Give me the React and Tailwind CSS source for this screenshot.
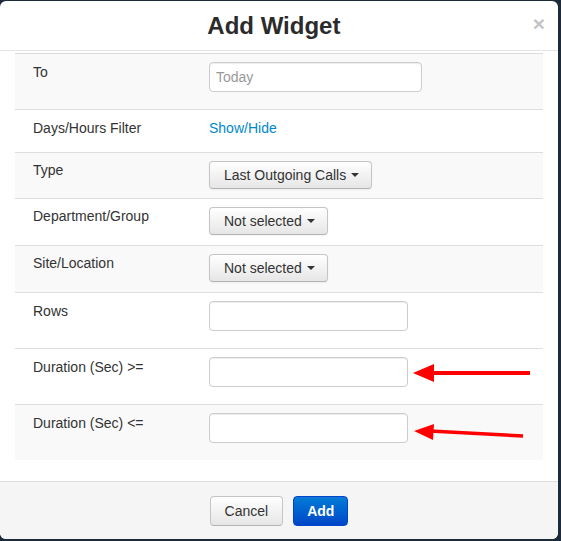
import React from "react";

const font = { fontFamily: '"Liberation Sans", Arial, sans-serif' };

function Caret() {
  return (
    <span className="ml-[5px] inline-block h-0 w-0 border-x-[4px] border-t-[4px] border-x-transparent border-t-[#333] align-middle" />
  );
}

function Dropdown({ label }) {
  return (
    <button
      type="button"
      className="mt-px flex h-[28px] items-center rounded-[4px] border border-[#c5c5c5] border-b-[#b3b3b3] bg-gradient-to-b from-white to-[#e6e6e6] pl-[14px] pr-[12px] text-[14px] text-[#333] shadow-[inset_0_1px_0_rgba(255,255,255,0.2),0_1px_2px_rgba(0,0,0,0.05)]"
    >
      {label}
      <Caret />
    </button>
  );
}

function TextInput({ width, placeholder }) {
  return (
    <input
      placeholder={placeholder}
      className={`h-[30px] ${width} rounded-[4px] border border-[#ccc] bg-white px-[6px] text-[14px] text-[#555] placeholder:text-[#999] shadow-[inset_0_1px_1px_rgba(0,0,0,0.075)] outline-none`}
    />
  );
}

const rows = [
  { label: "To", h: "h-[56px]", gray: true, field: <TextInput width="w-[213px]" placeholder="Today" /> },
  {
    label: "Days/Hours Filter",
    h: "h-[43px]",
    gray: false,
    field: <a className="block text-[14px] leading-[20px] text-[#0088cc]">Show/Hide</a>,
  },
  { label: "Type", h: "h-[46px]", gray: true, tight: true, field: <Dropdown label="Last Outgoing Calls" /> },
  { label: "Department/Group", h: "h-[47px]", gray: false, tight: true, field: <Dropdown label="Not selected" /> },
  { label: "Site/Location", h: "h-[47px]", gray: true, tight: true, field: <Dropdown label="Not selected" /> },
  { label: "Rows", h: "h-[56px]", gray: false, field: <TextInput width="w-[199px]" /> },
  { label: "Duration (Sec) >=", h: "h-[56px]", gray: false, field: <TextInput width="w-[199px]" /> },
  { label: "Duration (Sec) <=", h: "h-[56px]", gray: true, field: <TextInput width="w-[199px]" /> },
];

export default function App() {
  return (
    <div className="relative h-[541px] w-[561px] overflow-hidden bg-[#1d2a39] pt-px" style={font}>
      <div className="flex h-[538px] w-[558px] flex-col overflow-hidden rounded-[6px] bg-white">
        <div className="flex h-[50px] shrink-0 items-center border-b border-[#e5e5e5] pl-[15px] pr-[13px]">
          <h3 className="flex-1 text-center text-[24px] font-bold leading-[30px] text-[#2b2b2b]">Add Widget</h3>
          <span className="-mt-[4px] text-[21px] font-bold leading-none text-[#c4c4c4]">×</span>
        </div>
        <div className="h-[430px] shrink-0 px-[15px] pt-[2px]">
          {rows.map((r) => (
            <div
              key={r.label}
              className={`flex ${r.h} border-t border-[#dddddd] ${r.gray ? "bg-[#f9f9f9]" : "bg-white"}`}
            >
              <div className={`w-[194px] pl-[18px] text-[14px] leading-[20px] text-[#333] ${r.tight ? "pt-[7px]" : "pt-[8px]"}`}>
                {r.label}
              </div>
              <div className={r.tight ? "pt-[7px]" : "pt-[8px]"}>{r.field}</div>
            </div>
          ))}
        </div>
        <div className="flex flex-1 justify-center gap-[10px] border-t border-[#dddddd] bg-[#f5f5f5] pt-[14px]">
          <button
            type="button"
            className="h-[30px] rounded-[4px] border border-[#c5c5c5] border-b-[#b3b3b3] bg-gradient-to-b from-white to-[#e6e6e6] px-[14px] text-[14px] text-[#333]"
          >
            Cancel
          </button>
          <button
            type="button"
            className="h-[30px] rounded-[4px] border border-[#0044cc] bg-gradient-to-b from-[#0a7bd6] to-[#0045c8] px-[13px] text-[14px] font-bold text-white"
          >
            Add
          </button>
        </div>
      </div>
      <svg className="pointer-events-none absolute left-0 top-0" width="561" height="541">
        <line x1="430" y1="373" x2="530" y2="373" stroke="#ff0000" strokeWidth="4" />
        <polygon points="413,373 434,364 434,382" fill="#ff0000" />
        <line x1="430" y1="431" x2="523" y2="436" stroke="#ff0000" strokeWidth="3.5" />
        <polygon points="414,431 434,424 433,440" fill="#ff0000" />
      </svg>
    </div>
  );
}
